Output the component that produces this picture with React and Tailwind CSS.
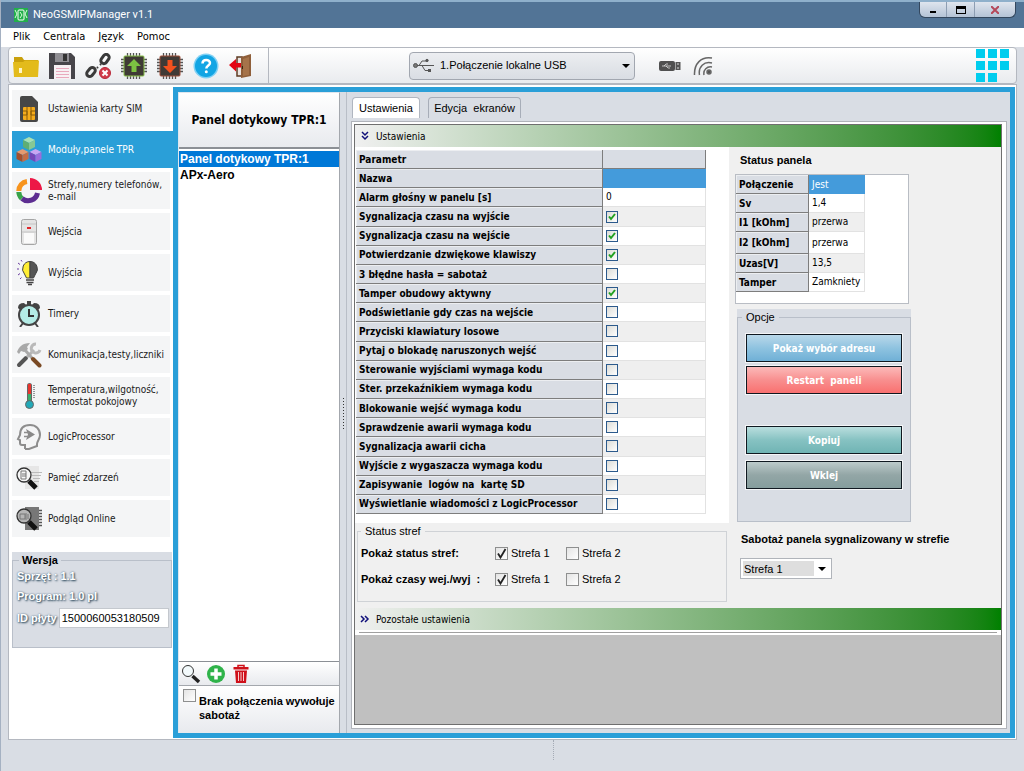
import React, { useState } from 'react';

const tahoma = 'font-["DejaVu_Sans_Condensed","DejaVu_Sans",sans-serif]';

/* ---------- toolbar icons ---------- */

const FolderIcon = () => (
  <svg viewBox="0 0 26 26" className="w-[26px] h-[26px]">
    <path d="M1 4h8l2 3h14v6H1z" fill="#c9a00c" />
    <path d="M0 9h10l2-1.500h14L25 24H1z" fill="#e3bb1b" />
    <rect x="6" y="15" width="3" height="5" fill="#fff6c8" />
  </svg>
);

const FloppyIcon = () => (
  <svg viewBox="0 0 26 26" className="w-[26px] h-[26px]">
    <path d="M0 0h22l4 4v22H0z" fill="#47454a" />
    <rect x="6" y="0" width="14" height="9" fill="#8f8d92" />
    <rect x="14" y="1" width="4" height="7" fill="#333" />
    <rect x="5" y="12" width="17" height="14" fill="#f7f0f3" />
    <path d="M7 15.500h13M7 18.500h13M7 21.500h13M7 24.500h13" stroke="#e9a9bd" />
  </svg>
);

const ChainIcon = () => (
  <svg viewBox="0 0 26 26" className="w-[26px] h-[26px]" fill="none">
    <rect x="-3" y="-5" width="6" height="10" rx="3" transform="translate(20 6) rotate(35)" stroke="#3a3a3a" strokeWidth="3" />
    <rect x="-3" y="-5" width="6" height="10" rx="3" transform="translate(6 19) rotate(40)" stroke="#3a3a3a" strokeWidth="3" />
    <path d="m12 15 1-1M15 12l1-1" stroke="#3a3a3a" strokeWidth="2" />
    <circle cx="20" cy="20" r="5.500" fill="#d13b4a" stroke="#b8283a" />
    <path d="m17.500 17.500 5 5m0-5-5 5" stroke="#fff" strokeWidth="2" />
  </svg>
);

const ChipIcon = ({ color, down }) => (
  <svg viewBox="0 0 26 26" className="w-[26px] h-[26px]">
    <path d="M6.500 0v26M9.500 0v26M12.500 0v26M15.500 0v26M18.500 0v26M0 6.500h26M0 9.500h26M0 12.500h26M0 15.500h26M0 18.500h26" stroke="#555" strokeWidth="1.300" />
    <rect x="3" y="3" width="20" height="20" rx="1" fill="#3f3a36" stroke={color} />
    {down ? (
      <path d="M10.500 7h5v6H20l-7 7-7-7h4.500z" fill="#f4511e" />
    ) : (
      <path d="M10.500 19h5v-6H20l-7-7-7 7h4.500z" fill="#7cc242" />
    )}
  </svg>
);

const HelpIcon = () => (
  <svg viewBox="0 0 26 26" className="w-[26px] h-[26px]">
    <circle cx="13" cy="13" r="12.500" fill="#7fd0f4" />
    <circle cx="13" cy="13" r="11" fill="#12a5e4" />
    <path d="M9.500 10.500c0-5 7.500-4.500 7.500-.5 0 2.500-3.700 2.500-3.700 5.500" fill="none" stroke="#fff" strokeWidth="2.500" />
    <circle cx="13.300" cy="18.800" r="1.500" fill="#fff" />
  </svg>
);

const ExitIcon = () => (
  <svg viewBox="0 0 26 26" className="w-[26px] h-[26px]">
    <path d="M8 4h5v19H8z" fill="#e9e4e0" stroke="#5d3a22" strokeWidth="1.500" />
    <path d="m12 4 10-3v22l-10 2z" fill="#8f5f3a" />
    <path d="m14 6 6-2v18l-6 1z" fill="#a5734a" />
    <path d="M13.500 13v3" stroke="#3c2414" />
    <path d="M0 12 7 6v4h5v4.500H7v4z" fill="#e30613" />
  </svg>
);

const UsbIcon = () => (
  <svg viewBox="0 0 22 16" className="w-[22px] h-4" fill="none" stroke="#555">
    <circle cx="2.500" cy="7.500" r="2" fill="#777" />
    <path d="M4 7.500h17M6 7.500l3-4.500h4M9 7.500l3 5h3" />
    <circle cx="14" cy="2.500" r="1.200" fill="#555" />
    <rect x="15.500" y="11.500" width="2" height="2" fill="#555" />
  </svg>
);

const PendriveIcon = () => (
  <svg viewBox="0 0 22 10" className="w-[22px] h-2.5">
    <rect x="0" y="0" width="16" height="10" rx="2" fill="#505050" />
    <rect x="16.500" y="1" width="5" height="8" fill="#555" />
    <path d="M3 5h9M5 5l2-2h2M7 5l2 2h2" stroke="#ddd" fill="none" strokeWidth=".8" />
    <path d="M18 3h2M18 7h2" stroke="#ddd" />
  </svg>
);

const WifiIcon = () => (
  <svg viewBox="0 0 20 20" className="w-5 h-5" fill="none" stroke="#666" strokeWidth="1.500">
    <circle cx="16" cy="16" r="2" fill="#555" />
    <path d="M11 19c-1-5 3-9 8-8M6.500 19C5 11 11 5 19 7M1.500 19C1 8 8 0 19 2" />
  </svg>
);

/* ---------- sidebar icons ---------- */

const SimIcon = () => (
  <svg viewBox="0 0 26 26" className="w-[26px] h-[26px]">
    <path d="M4 2q0-2 2-2h10l6 6v18q0 2-2 2H6q-2 0-2-2z" fill="#474747" />
    <rect x="7" y="11" width="12" height="13" rx="1" fill="#f6ac1c" />
    <path d="M7 15h4v4H7M19 15h-4v4h4M11 11v13M15 11v13" fill="none" stroke="#8a5c08" />
  </svg>
);

const CubesIcon = () => (
  <svg viewBox="0 0 26 26" className="w-[26px] h-[26px]">
    <path d="m13 0 6 3-6 3-6-3z" fill="#a8e0b4" />
    <path d="m7 3 6 3v7l-6-3z" fill="#5fae74" />
    <path d="m19 3-6 3v7l6-3z" fill="#86c894" />
    <path d="m6.500 12 6 3-6 3-6-3z" fill="#e59a70" />
    <path d="m.5 15 6 3v7l-6-3z" fill="#a34f2d" />
    <path d="m12.500 15-6 3v7l6-3z" fill="#c56d45" />
    <path d="m19.500 12 6 3-6 3-6-3z" fill="#c9a5f2" />
    <path d="m13.500 15 6 3v7l-6-3z" fill="#7547b8" />
    <path d="m25.500 15-6 3v7l6-3z" fill="#9a6ddb" />
  </svg>
);

const DonutIcon = () => (
  <svg viewBox="0 0 26 26" className="w-[26px] h-[26px]" fill="none" strokeWidth="5">
    <path d="M11 3.500A9.500 9.500 0 0 0 2.800 13" stroke="#f7941d" />
    <path d="M2.800 14a9.500 9.500 0 0 0 3 6.500" stroke="#39a34a" />
    <path d="M6 20.500A9.500 9.500 0 0 0 21.500 15" stroke="#5c2d91" />
    <path d="M14 0a12 12 0 0 1 12 12H14z" fill="#ed1846" />
  </svg>
);

const SensorIcon = () => (
  <svg viewBox="0 0 26 26" className="w-[26px] h-[26px]">
    <rect x="5.500" y=".5" width="15" height="25" rx="2" fill="#e4e4e4" stroke="#a5a5a5" />
    <path d="M6 5h14M6 13h14" stroke="#c4c4c4" />
    <rect x="8" y="14" width="10" height="10" fill="#fafafa" />
    <rect x="11" y="8" width="4" height="2" fill="#e0262b" />
  </svg>
);

const BulbIcon = () => (
  <svg viewBox="0 0 26 26" className="w-[26px] h-[26px]">
    <path d="M14 1.500A7.500 7.500 0 0 0 8.500 14l2 4H14z" fill="#ffee33" stroke="#444" />
    <path d="M14 1.500A7.500 7.500 0 0 1 19.500 14l-2 4H14z" fill="#555" stroke="#444" />
    <path d="M10 20h8M10.500 22.500h7M12 24.500h4" stroke="#444" strokeWidth="1.500" />
    <path d="M1 9h2M2 3l2 1.500M5 0l1 1.500M2 15l2-1.500M4 19l1.500-1.500" stroke="#6b3fa0" />
  </svg>
);

const ClockIcon = () => (
  <svg viewBox="0 0 26 26" className="w-[26px] h-[26px]">
    <path d="M2 7q0-5 6-5l2 2-6 5zM24 7q0-5-6-5l-2 2 6 5z" fill="#444" />
    <path d="M12 0h2v4h-2zM4 26l3-4M22 26l-3-4" stroke="#444" strokeWidth="2" />
    <circle cx="13" cy="14" r="10" fill="#b4ece6" stroke="#444" strokeWidth="2" />
    <path d="M13 8v7h5" fill="none" stroke="#333" strokeWidth="2" />
  </svg>
);

const ToolsIcon = () => (
  <svg viewBox="0 0 26 26" className="w-[26px] h-[26px]" fill="none">
    <path d="m10 16-7 7" stroke="#555" strokeWidth="4" strokeLinecap="round" />
    <path d="m11 15 7-7" stroke="#b5b5b5" strokeWidth="3" />
    <path d="M20 2a4.500 4.500 0 1 0 4 6" stroke="#b9b9b9" strokeWidth="3" />
    <path d="m9 8 7 8" stroke="#aaa" strokeWidth="3" />
    <path d="m17 17 6.500 6.500" stroke="#7a4a24" strokeWidth="4" strokeLinecap="round" />
    <path d="M1 10c2-5 5-9 13-9l-3 4 1 2-4 3-3-1-2 3z" fill="#a9a9a9" />
  </svg>
);

const ThermometerIcon = () => (
  <svg viewBox="0 0 26 26" className="w-[26px] h-[26px]">
    <rect x="11" y="0" width="5" height="20" rx="2.500" fill="#666" />
    <rect x="12" y="1" width="3" height="10" fill="#e8352e" />
    <rect x="12" y="11" width="3" height="8" fill="#3cae6b" />
    <circle cx="13.500" cy="21.500" r="4" fill="#22a9b8" stroke="#666" />
    <path d="M17 2.500h2M17 4.500h2M17 6.500h2M17 8.500h2M17 10.500h2M17 12.500h2M17 14.500h2" stroke="#999" />
  </svg>
);

const HeadIcon = () => (
  <svg viewBox="0 0 26 26" className="w-[26px] h-[26px]" fill="none" stroke="#8d8d8d" strokeWidth="2">
    <path d="M9 25v-4H6q-2 0-2-2v-3l-2-1 2-4C4 4 8 1 14 1c6 0 10 4 10 10 0 4-3 6-3 9v2l-8 3H9" />
    <path d="m10 5 9 5.500-9 5.500 2-5.500z" stroke="none" fill="#888" />
    <path d="M8 8.500h5M8 12.500h5" strokeWidth="1.500" />
  </svg>
);

const LoupeDocIcon = ({ dark }) => (
  <svg viewBox="0 0 26 26" className="w-[26px] h-[26px]">
    <rect x="9" y="1" width="14" height="23" fill={dark ? '#777' : '#e6e6e6'} />
    {dark ? (
      <path d="M23 4.500h3M23 7.500h3M23 10.500h3M23 13.500h3M23 16.500h3M23 19.500h3" stroke="#555" strokeWidth="1.500" />
    ) : (
      <path d="M14 7.500h12M16 10.500h9M17 13.500h7M18 16.500h5" stroke="#bbb" />
    )}
    <circle cx="8" cy="10" r="7" fill={dark ? '#b5b5b5' : '#f6f6f6'} stroke="#333" strokeWidth="1.300" />
    <path d={dark ? 'M4 8h5v5H4zM10 7v7M12 8v5' : 'M5 6h5v8H5zM6 9h4M6 11h4'} fill="none" stroke="#777" />
    <path d="m13 16 7 7" stroke="#111" strokeWidth="5" />
  </svg>
);

const LoupeIcon = () => (
  <svg viewBox="0 0 20 20" className="w-5 h-5">
    <circle cx="7" cy="7" r="5.500" fill="#f3fafc" stroke="#333" />
    <path d="m11.500 12 6.500 6" stroke="#222" strokeWidth="3.500" />
  </svg>
);

const AddIcon = () => (
  <svg viewBox="0 0 20 20" className="w-5 h-5">
    <circle cx="10" cy="10" r="9" fill="#2fb34a" />
    <path d="M10 4.500v11M4.500 10h11" stroke="#fff" strokeWidth="3.500" />
  </svg>
);

const TrashIcon = () => (
  <svg viewBox="0 0 20 20" className="w-5 h-5">
    <path d="M7 3V1.500h6V3" fill="none" stroke="#cf101a" strokeWidth="1.500" />
    <path d="M2.500 3h15v2.500h-15zM4 6.500h12L15 19H5z" fill="#cf101a" />
    <path d="M7.500 8v9M10 8v9M12.500 8v9" stroke="#fff" strokeWidth=".8" />
  </svg>
);

const Chevrons = ({ down }) => (
  <svg viewBox="0 0 10 10" className="w-2.5 h-2.5" fill="none" stroke="#10107a" strokeWidth="1.500">
    {down ? <path d="m2 1 3 3 3-3M2 5l3 3 3-3" /> : <path d="m1 2 3 3-3 3M5 2l3 3-3 3" />}
  </svg>
);

const toolbar = [
  { label: 'Otwórz', icon: <FolderIcon /> },
  { label: 'Zapisz', icon: <FloppyIcon /> },
  { label: 'Rozłącz', icon: <ChainIcon /> },
  { label: 'Odczytaj', icon: <ChipIcon color="#8bc34a" /> },
  { label: 'Wyślij', icon: <ChipIcon color="#a0503a" down /> },
  { label: 'Pomoc', icon: <HelpIcon /> },
  { label: 'Wyjście', icon: <ExitIcon /> },
];

const sections = [
  { label: 'Ustawienia karty SIM', icon: <SimIcon /> },
  { label: 'Moduły,panele TPR', icon: <CubesIcon /> },
  { label: 'Strefy,numery telefonów, e-mail', icon: <DonutIcon /> },
  { label: 'Wejścia', icon: <SensorIcon /> },
  { label: 'Wyjścia', icon: <BulbIcon /> },
  { label: 'Timery', icon: <ClockIcon /> },
  { label: 'Komunikacja,testy,liczniki', icon: <ToolsIcon /> },
  { label: 'Temperatura,wilgotność, termostat pokojowy', icon: <ThermometerIcon /> },
  { label: 'LogicProcessor', icon: <HeadIcon /> },
  { label: 'Pamięć zdarzeń', icon: <LoupeDocIcon /> },
  { label: 'Podgląd Online', icon: <LoupeDocIcon dark /> },
];

const params = [
  ['Sygnalizacja czasu na wyjście', true],
  ['Sygnalizacja czasu na wejście', true],
  ['Potwierdzanie dzwiękowe klawiszy', true],
  ['3 błędne hasła = sabotaż', false],
  ['Tamper obudowy aktywny', true],
  ['Podświetlanie gdy czas na wejście', false],
  ['Przyciski klawiatury losowe', false],
  ['Pytaj o blokadę naruszonych wejść', false],
  ['Sterowanie wyjściami wymaga kodu', false],
  ['Ster. przekaźnikiem wymaga kodu', false],
  ['Blokowanie wejść wymaga kodu', false],
  ['Sprawdzenie awarii wymaga kodu', false],
  ['Sygnalizacja awarii cicha', false],
  ['Wyjście z wygaszacza wymaga kodu', false],
  ['Zapisywanie  logów na  kartę SD', false],
  ['Wyświetlanie wiadomości z LogicProcessor', false],
];

const statusRows = [
  ['Połączenie', 'Jest'],
  ['Sv', '1,4'],
  ['I1 [kOhm]', 'przerwa'],
  ['I2 [kOhm]', 'przerwa'],
  ['Uzas[V]', '13,5'],
  ['Tamper', 'Zamkniety'],
];

const headCell =
  'bg-[#d9dde4] border-b border-r border-[#7d7d7d] pl-[3px] pt-px text-left font-bold whitespace-pre shadow-[inset_1px_1px_0_#eceef1]';

function GridCheck({ id, defaultChecked }) {
  return (
    <span className="relative block w-3 h-3">
      <input
        id={id}
        type="checkbox"
        defaultChecked={defaultChecked}
        className="peer block appearance-none w-3 h-3 border border-[#2c5a8c] bg-linear-to-br from-[#dcdcd7] to-white"
      />
      <svg viewBox="0 0 12 12" className="absolute inset-0 w-3 h-3 pointer-events-none hidden peer-checked:block">
        <path d="m3 5.500 2 2.500 4-5" fill="none" stroke="#21a121" strokeWidth="2" />
      </svg>
    </span>
  );
}

function BigCheck({ label, defaultChecked, className }) {
  return (
    <label className={`flex items-center gap-[3px] ${className || ''}`}>
      <span className="relative block w-[13px] h-[13px] shrink-0">
        <input
          type="checkbox"
          aria-label={label ? undefined : 'Brak połączenia wywołuje sabotaż'}
          defaultChecked={defaultChecked}
          className="peer block appearance-none w-[13px] h-[13px] border border-[#8e8f8f] bg-linear-to-br from-[#e4e4e4] to-white"
        />
        <svg viewBox="0 0 13 13" className="absolute inset-0 w-[13px] h-[13px] pointer-events-none hidden peer-checked:block">
          <path d="m3 6.500 2.500 4L10.500 2" fill="none" stroke="#222" strokeWidth="1.800" />
        </svg>
      </span>
      {label}
    </label>
  );
}

function GreenBar({ title, down }) {
  return (
    <div className={`h-[22px] shrink-0 flex items-center gap-[6px] pl-[5px] bg-linear-to-r from-[#f0f0f0] to-[#008000] text-[10px] ${tahoma}`}>
      <Chevrons down={down} />
      <span>{title}</span>
    </div>
  );
}

function Sidebar() {
  const [active, setActive] = useState(1);
  return (
    <aside className="w-[164px] shrink-0 pl-[3px] pt-[5px]">
      <nav className="flex flex-col gap-1">
        {sections.map((s, i) => (
          <button
            key={s.label}
            onClick={() => setActive(i)}
            className={
              i === active
                ? `h-[37px] flex items-center gap-[6px] pl-1 text-left text-[10px] leading-3 bg-[#2a9fd8] text-white ${tahoma}`
                : `h-[37px] flex items-center gap-[6px] pl-1 mr-[3px] text-left text-[10px] leading-3 bg-[#f4f5f6] text-[#1a1a1a] ${tahoma}`
            }
          >
            <span className="shrink-0">{s.icon}</span>
            <span>{s.label}</span>
          </button>
        ))}
      </nav>

      <div className="mt-[15px] mr-px bg-[#d9dde4]">
        <fieldset className="min-w-0 h-24 border border-[#b9bfc9] pl-1 text-[11px] font-bold">
          <legend className="ml-[2px] px-[3px] leading-4">Wersja</legend>
          <div className="text-white [text-shadow:1px_1px_2px_#2b4658,0_0_2px_#5b7890]">
            <p className="leading-4">Sprzęt : 1.1</p>
            <p className="mt-1 leading-4">Program: 1.0 pl</p>
            <div className="mt-1 flex items-center gap-[2px]">
              <label htmlFor="board-id" className="shrink-0">ID płyty</label>
              <input
                id="board-id"
                defaultValue="1500060053180509"
                className="min-w-0 flex-1 h-5 mr-[2px] pl-[2px] border border-[#c4c8ce] bg-white text-[11px] font-normal text-black [text-shadow:none]"
              />
            </div>
          </div>
        </fieldset>
      </div>
    </aside>
  );
}

function DevicePanel() {
  const [device, setDevice] = useState(0);
  return (
    <div className="w-[162px] shrink-0 flex flex-col border-l border-t border-r border-[#dfe6ee] border-r-[#a3a7ad] bg-white">
      <div className={`h-[54px] flex items-center justify-center bg-linear-to-b from-white to-[#e8eaee] text-xs font-bold ${tahoma}`}>
        Panel dotykowy TPR:1
      </div>
      <ul className="flex-1 pt-[2px] border-t-2 border-b border-[#8b8f95] text-xs font-bold">
        {['Panel dotykowy TPR:1', 'APx-Aero'].map((name, i) => (
          <li key={name}>
            <button
              onClick={() => setDevice(i)}
              className={
                i === device
                  ? 'block w-full h-4 pl-px leading-4 text-left bg-[#0078d7] text-white'
                  : 'block w-full h-4 pl-px leading-4 text-left'
              }
            >
              {name}
            </button>
          </li>
        ))}
      </ul>
      <div className="h-6 flex items-center gap-[5px] pl-[2px] bg-linear-to-b from-white to-[#e8eaee] border-b border-[#a3a7ad]">
        <button aria-label="Szukaj"><LoupeIcon /></button>
        <button aria-label="Dodaj"><AddIcon /></button>
        <button aria-label="Usuń"><TrashIcon /></button>
      </div>
      <div className="h-[47px] flex gap-[3px] pt-[3px] pl-1 bg-linear-to-b from-white to-[#e8eaee] text-[11px] font-bold leading-[14px]">
        <BigCheck className="self-start" />
        <span className="pt-[5px]">Brak połączenia wywołuje sabotaż</span>
      </div>
    </div>
  );
}

function ParamTable() {
  return (
    <table className={`w-[350px] h-[364px] table-fixed border-separate border-spacing-0 text-[10px] leading-3 ${tahoma}`}>
      <colgroup>
        <col className="w-[247px]" />
        <col />
      </colgroup>
      <tbody>
        <tr>
          <th className={headCell}>Parametr</th>
          <td className="bg-[#d9dde4] border-b border-r border-[#7d7d7d]" />
        </tr>
        <tr>
          <th className={headCell}>Nazwa</th>
          <td className="bg-[#449bdb]" />
        </tr>
        <tr>
          <th className={headCell}>Alarm głośny w panelu [s]</th>
          <td className="pl-[3px] border-b border-r border-[#e2e2e2]">0</td>
        </tr>
        {params.map(([name, on], i) => (
          <tr key={name} className={i % 2 ? 'bg-white' : 'bg-[#efefef]'}>
            <th className={headCell}>
              <label htmlFor={`param-${i}`}>{name}</label>
            </th>
            <td className="pl-[3px] border-b border-r border-[#e2e2e2]">
              <GridCheck id={`param-${i}`} defaultChecked={on} />
            </td>
          </tr>
        ))}
      </tbody>
    </table>
  );
}

function StatusZones() {
  return (
    <fieldset className="mx-[2px] h-[79px] border border-[#cfd2d6] pl-[3px] text-[11px]">
      <legend className="px-1 mb-px leading-4">Status stref</legend>
      {['Pokaż status stref:', 'Pokaż czasy wej./wyj  :'].map((text) => (
        <div key={text} className="h-[26px] flex items-center">
          <span className="w-[134px] font-bold whitespace-pre">{text}</span>
          <BigCheck label="Strefa 1" defaultChecked className="w-[71px]" />
          <BigCheck label="Strefa 2" />
        </div>
      ))}
    </fieldset>
  );
}

const optionBtn = `block w-full h-7 border border-[#101820] outline outline-white/70 text-[10px] font-bold text-white whitespace-pre ${tahoma}`;

function StatusColumn() {
  return (
    <div className="flex-1 pl-[6px] pt-[5px] text-[11px]">
      <h2 className="pl-[5px] leading-4 font-bold">Status panela</h2>

      <div className="mt-[6px] w-[174px] h-[130px] border border-[#b9bdc4] bg-white">
        <table className={`w-[129px] table-fixed border-separate border-spacing-0 text-[10px] leading-3 ${tahoma}`}>
          <colgroup>
            <col className="w-[73px]" />
            <col />
          </colgroup>
          <tbody>
            {statusRows.map(([name, value], i) => (
              <tr key={name} className={i === 3 ? 'h-[22px]' : 'h-[19px]'}>
                <th className={headCell}>{name}</th>
                <td
                  className={
                    i === 0
                      ? 'pl-[3px] bg-[#449bdb] text-white'
                      : i % 2
                        ? 'pl-[3px] border-b border-r border-[#e2e2e2]'
                        : 'pl-[3px] border-b border-r border-[#e2e2e2] bg-[#efefef]'
                  }
                >
                  {value}
                </td>
              </tr>
            ))}
          </tbody>
        </table>
      </div>

      <div className="mt-[5px] ml-[2px] w-[174px] bg-[#d9dde4]">
        <fieldset className="h-[213px] border border-[#b9bfc9] px-2">
          <legend className="-ml-1 px-1 leading-4">Opcje</legend>
          <div className="mt-[9px] flex flex-col gap-1">
            <button className={`${optionBtn} bg-linear-to-b from-[#b9d8ea] from-0% via-[#8fc3e0] via-50% to-[#6fb0d6]`}>Pokaż wybór adresu</button>
            <button className={`${optionBtn} bg-linear-to-b from-[#fbb9b9] from-0% via-[#f88f8f] via-50% to-[#f97070]`}>Restart  paneli</button>
          </div>
          <div className="mt-8 flex flex-col gap-[7px]">
            <button className={`${optionBtn} bg-linear-to-b from-[#b9dede] from-0% via-[#86c2c2] via-50% to-[#70b4b4]`}>Kopiuj</button>
            <button className={`${optionBtn} bg-linear-to-b from-[#bccaca] from-0% via-[#93a6a6] via-50% to-[#859d9d]`}>Wklej</button>
          </div>
        </fieldset>
      </div>

      <label htmlFor="sabotage-zone" className="block mt-[9px] pl-[6px] leading-4 font-bold">
        Sabotaż panela sygnalizowany w strefie
      </label>
      <div className="relative mt-[11px] ml-[5px] w-[92px] h-[21px] border border-[#b0b4ba] bg-white p-[2px]">
        <select id="sabotage-zone" className="block appearance-none w-[71px] h-full pl-px bg-[#dedede]">
          <option>Strefa 1</option>
          <option>Strefa 2</option>
        </select>
        <svg viewBox="0 0 8 4" className="absolute right-[5px] top-2 w-2 h-1 pointer-events-none">
          <path d="M0 0h8L4 4z" />
        </svg>
      </div>
    </div>
  );
}

export default function App() {
  return (
    <div className='min-h-screen flex flex-col bg-[#d9dde4] border-l border-[#a5b1c2] text-black font-["Liberation_Sans",Arial,sans-serif]'>
      <header className="h-7 flex items-center gap-1 pl-3 pr-2 bg-[#527496] border-t-2 border-[#8fb0cb]">
        <svg viewBox="0 0 16 16" className="w-4 h-4">
          <rect x="1" y="1" width="14" height="14" fill="#22b04b" />
          <rect x="5" y="3" width="6" height="10" rx="1" fill="none" stroke="#fff" />
          <path d="M2 3l2 4-2 4M14 3l-2 4 2 4M7 5l2 3-2 3" stroke="#d6ffd9" fill="none" />
        </svg>
        <h1 className="text-[11px] text-white font-[Roboto,sans-serif]">NeoGSMIPManager v1.1</h1>
        <div className="ml-auto self-start h-4 flex rounded-b-md border border-t-0 border-[#33475e] bg-linear-to-b from-[#dfe5ee] to-[#b4c3d6] overflow-hidden">
          <button aria-label="Minimalizuj" className="w-[27px] flex items-center justify-center border-r border-[#8d9db2]">
            <svg viewBox="0 0 8 8" className="w-2 h-2"><path d="M1 5h6v2H1z" /></svg>
          </button>
          <button aria-label="Maksymalizuj" className="w-7 flex items-center justify-center border-r border-[#8d9db2]">
            <svg viewBox="0 0 10 8" className="w-2.5 h-2"><path d="M0 0h10v8H0zM1 3v4h8V3z" fillRule="evenodd" /></svg>
          </button>
          <button aria-label="Zamknij" className="w-10 flex items-center justify-center">
            <svg viewBox="0 0 8 8" className="w-2 h-2"><path d="m0 0 8 8m0-8L0 8" stroke="#b5485a" strokeWidth="2" /></svg>
          </button>
        </div>
      </header>

      <nav className={`h-[19px] flex items-center gap-[13px] pl-3 bg-white text-[11px] ${tahoma}`}>
        {['Plik', 'Centrala', 'Język', 'Pomoc'].map((m) => (
          <button key={m}>{m}</button>
        ))}
      </nav>

      <div className="h-[37px] ml-[7px] mr-[7px] flex items-center border border-[#b4b8c0] rounded-sm bg-linear-to-b from-white to-[#e9ebee]">
        <div className="h-full flex items-center gap-[10px] pl-1 w-[260px] border-r border-[#b4b8c0]">
          {toolbar.map((t) => (
            <button key={t.label} aria-label={t.label}>{t.icon}</button>
          ))}
        </div>
        <div className="relative ml-[140px] w-[226px] h-7">
          <select
            aria-label="Połączenie"
            className="block appearance-none w-full h-full pl-[30px] border border-[#a2a7b0] rounded-sm bg-linear-to-b from-[#eceef1] to-[#d9dde3] text-[11px]"
          >
            <option>1.Połączenie lokalne USB</option>
          </select>
          <span className="absolute left-1 top-[6px] pointer-events-none"><UsbIcon /></span>
          <svg viewBox="0 0 8 4" className="absolute right-[5px] top-3 w-2 h-1 pointer-events-none">
            <path d="M0 0h8L4 4z" />
          </svg>
        </div>
        <div className="ml-6 flex items-center gap-3">
          <PendriveIcon />
          <WifiIcon />
        </div>
        <div className="ml-auto mr-[7px] grid grid-cols-3 gap-[3px]">
          {[0, 1, 2, 3, 4, 5, 6, 7].map((n) => (
            <span key={n} className="w-[9px] h-[9px] bg-[#00cdee]" />
          ))}
        </div>
      </div>

      <main className="flex-1 ml-[7px] mr-[7px] flex border border-[#b4b8c0] bg-white pr-px">
        <Sidebar />
        <div className="flex-1 min-w-0 mt-[2px] mb-px flex border-[5px] border-[#2a9fd8] bg-[#d9dde4]">
          <DevicePanel />
          <div className="w-[7px] shrink-0 flex items-center border-r border-[#b9bec7] pl-[2px]">
            <span className="w-[3px] h-8 bg-[radial-gradient(#333_1px,transparent_1px)] bg-[size:3px_3px]" />
          </div>

          <section className="flex-1 min-w-0 flex flex-col pt-[5px] pb-1 pl-1 pr-[3px] text-[11px]">
            <div role="tablist" className="flex gap-2 pl-px">
              <button role="tab" className="h-[21px] w-[68px] bg-white border border-b-0 border-[#b0b6c0] rounded-t-sm">Ustawienia</button>
              <button role="tab" className="h-[21px] w-[93px] border border-b-0 border-[#a7adb8] rounded-t-sm whitespace-pre">Edycja  ekranów</button>
            </div>
            <div className="flex-1 mt-[3px] flex flex-col border border-[#b0b3ba] bg-white pt-[2px] pl-[2px] pr-1 pb-[3px]">
              <div className="flex-1 flex flex-col border border-[#6f6f6f] bg-[#c0c0c0]">
                <GreenBar title="Ustawienia" down />
                <div className="h-[461px] flex bg-[#f0f0f0]">
                  <div className="w-[374px] shrink-0 flex flex-col">
                    <div className="h-[376px] pl-px pt-[3px] bg-white">
                      <ParamTable />
                    </div>
                    <StatusZones />
                  </div>
                  <StatusColumn />
                </div>
                <GreenBar title="Pozostałe ustawienia" />
                <div className="h-[5px] px-1 pt-[2px] bg-white">
                  <div className="border-t border-[#a0a0a0]" />
                </div>
              </div>
            </div>
          </section>
        </div>
      </main>

      <footer className="h-[31px] flex justify-center pl-[82px]">
        <span className="h-5 border-l border-dotted border-[#a5abb5]" />
      </footer>
    </div>
  );
}
